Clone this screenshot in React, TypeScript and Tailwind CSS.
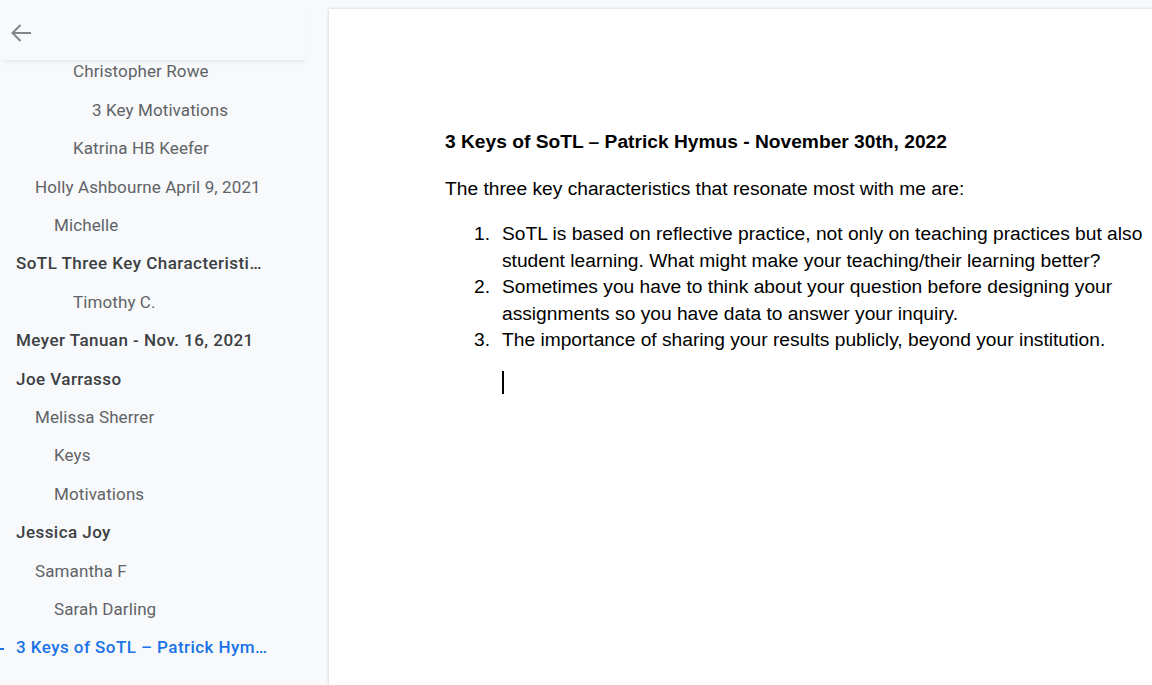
const outline = [
  { label: "Christopher Rowe", level: 4 },
  { label: "3 Key Motivations", level: 5 },
  { label: "Katrina HB Keefer", level: 4 },
  { label: "Holly Ashbourne April 9, 2021", level: 2 },
  { label: "Michelle", level: 3 },
  { label: "SoTL Three Key Characteristi…", level: 1 },
  { label: "Timothy C.", level: 4 },
  { label: "Meyer Tanuan - Nov. 16, 2021", level: 1 },
  { label: "Joe Varrasso", level: 1 },
  { label: "Melissa Sherrer", level: 2 },
  { label: "Keys", level: 3 },
  { label: "Motivations", level: 3 },
  { label: "Jessica Joy", level: 1 },
  { label: "Samantha F", level: 2 },
  { label: "Sarah Darling", level: 3 },
  { label: "3 Keys of SoTL – Patrick Hym…", level: 1, active: true },
];

const indent: Record<number, string> = {
  1: "pl-[16px]",
  2: "pl-[35px]",
  3: "pl-[54px]",
  4: "pl-[73px]",
  5: "pl-[92px]",
};

const items = [
  ["1.", "SoTL is based on reflective practice, not only on teaching practices but also student learning. What might make your teaching/their learning better?"],
  ["2.", "Sometimes you have to think about your question before designing your assignments so you have data to answer your inquiry."],
  ["3.", "The importance of sharing your results publicly, beyond your institution."],
];

export default function App() {
  return (
    <div className="h-[685px] w-[1152px] overflow-hidden flex bg-[#f8f9fa] font-['Roboto',sans-serif]">
      {/* Outline sidebar */}
      <aside className="w-[328px] shrink-0 flex flex-col bg-[#f8f9fa]">
        <div className="relative z-10 h-[60px] shrink-0 flex items-center pl-[11px] pt-[6px] bg-[#f8f9fa] shadow-[0_4px_4px_-3px_rgba(60,64,67,0.12)] mr-[20px]">
          <svg width="20" height="18" viewBox="0 0 20 18" fill="none" stroke="#80868b" strokeWidth="2">
            <path d="M20 9H1.5M9.5 1L1.5 9l8 8" />
          </svg>
        </div>
        <ul className="-mt-[7px]">
          {outline.map((item) => (
            <li
              key={item.label}
              className={`relative h-[38.4px] flex items-center text-[17px] whitespace-nowrap ${indent[item.level]} ${
                item.active
                  ? "text-[#1a73e8] font-medium tracking-[0.45px]"
                  : item.level === 1
                  ? "text-[#3c4043] font-medium tracking-[0.45px]"
                  : "text-[#5f6368] tracking-[0.1px]"
              }`}
            >
              {item.active && <span className="absolute left-0 top-1/2 w-[4px] h-[2px] bg-[#1a73e8]" />}
              {item.label}
            </li>
          ))}
        </ul>
      </aside>

      {/* Document canvas */}
      <main className="flex-1 pt-[9px] pl-[1px]">
        <div className="h-full bg-white shadow-[0_0_3px_rgba(60,64,67,0.25)] pl-[116px] pt-[120px] text-black font-['Liberation_Sans',Arial,sans-serif] text-[19.2px] leading-[26.5px]">
          <p className="font-bold">3 Keys of SoTL – Patrick Hymus - November 30th, 2022</p>
          <p className="mt-[20px]">The three key characteristics that resonate most with me are:</p>
          <ol className="mt-[19px] pl-[29px] w-[720px]">
            {items.map(([n, t]) => (
              <li key={n} className="flex">
                <span className="w-[28px] shrink-0">{n}</span>
                <span className="w-[650px]">{t}</span>
              </li>
            ))}
          </ol>
          <div className="ml-[57px] mt-[17px] w-[2px] h-[23px] bg-black" />
        </div>
      </main>
    </div>
  );
}
